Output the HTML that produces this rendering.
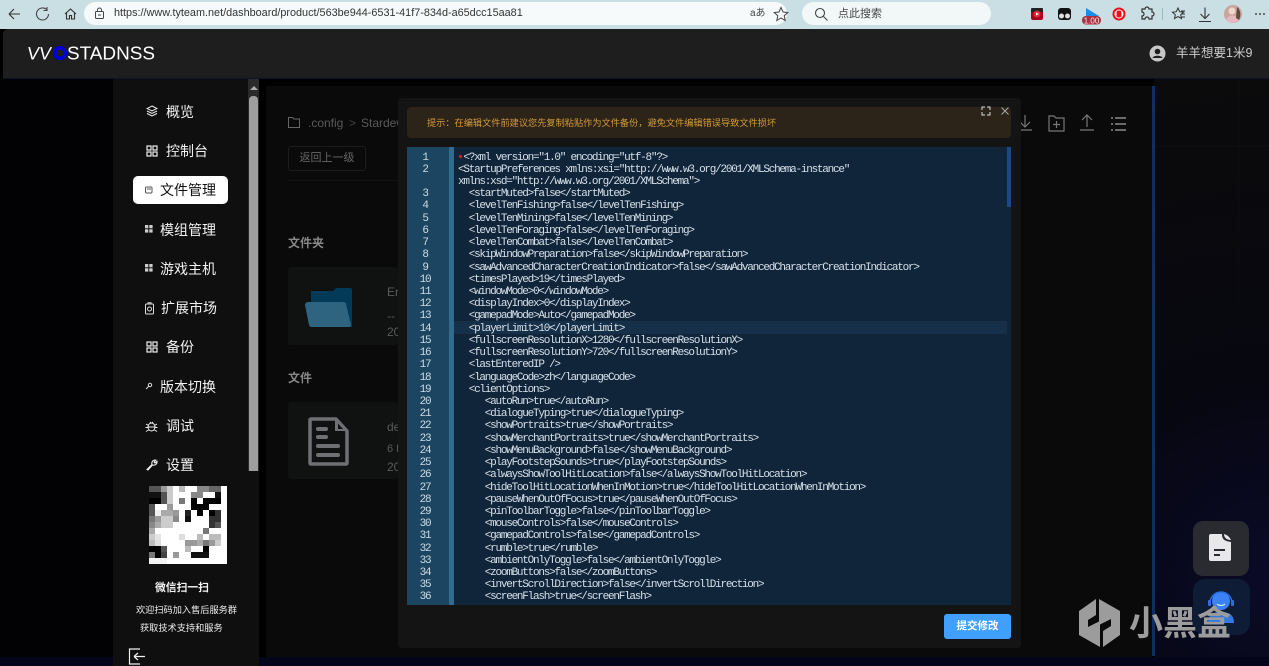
<!DOCTYPE html>
<html lang="zh"><head><meta charset="utf-8"><title>File Manager</title>
<style>
*{box-sizing:border-box}
html,body{margin:0;padding:0;background:#000}
body{width:1269px;height:666px;overflow:hidden;position:relative;font-family:"Liberation Sans","Noto Sans CJK SC",sans-serif}
.a{position:absolute}
.chrome{left:0;top:0;width:1269px;height:29px;background:#c9dfe3}
.pill{top:2px;height:23px;background:#f7fafa;border-radius:12px}
.url{left:114px;top:7px;font-size:10.850px;color:#333;white-space:nowrap}
.hdr{left:3px;top:29px;width:1266px;height:50px;background:#1e1e1e;border-radius:5px 0 0 0;border-bottom:1px solid #0a1428}
.side{left:113px;top:79px;width:146px;height:587px;background:#0f0f0f}
.mi{position:absolute;color:#f2f2f2;font-size:14px;line-height:20px;white-space:nowrap}
.active{left:133px;top:176px;width:95px;height:28px;background:#fff;border-radius:5px}
.code{left:458px;top:151.600px;font-family:"Liberation Mono",monospace;font-size:11px;letter-spacing:-1.244px;line-height:12.22px;color:#d5e0e8;white-space:pre;z-index:3}
.nums{left:407px;top:151.600px;width:32px;font-family:"Liberation Mono",monospace;font-size:11px;letter-spacing:-1.244px;line-height:12.22px;color:#cfdbe3;text-align:center;white-space:pre;z-index:3;padding-left:4px}
.dim{color:#5a5a5a;white-space:nowrap}
</style></head><body>
<div class="a" style="left:0;top:79px;width:1269px;height:587px;background:#020208"></div>
<div class="a" style="left:1154px;top:79px;width:115px;height:587px;background:radial-gradient(circle at 100% 85%,#0a0a28 0,#070710 40%,#0b0b0b 100%)"></div>
<div class="a" style="left:1238px;top:79px;width:1px;height:240px;background:linear-gradient(#0f0f0f,#0b0b0f)"></div>
<div class="a" style="left:1155px;top:146px;width:114px;height:1px;background:#0f0f0f"></div>
<div class="a" style="left:0;top:79px;width:113px;height:587px;background:#020204"></div>
<div class="a" style="left:259px;top:79px;width:895px;height:587px;background:#000"></div>
<div class="a" style="left:266px;top:86px;width:886px;height:571px;background:#0a0a0a"></div>
<div class="a" style="left:1152px;top:86px;width:3px;height:570px;background:#0c3066"></div>
<div class="a" style="left:0;top:657px;width:1269px;height:9px;background:#04041a"></div>

<!-- chrome -->
<div class="a chrome"></div>
<svg class="a" style="left:0;top:0" width="84" height="29" fill="none" stroke="#333" stroke-width="1.100">
<path d="M9 14H20M9 14l5-5M9 14l5 5"/>
<path d="M47 10a6 6 0 1 0 1.500 4M47 7v3.500h-3.500" stroke="#444"/>
<path d="M65 14l5.500-5 5.500 5M66.500 13v6h3v-3.500h2V19h3v-6"/>
</svg>
<div class="a pill" style="left:84px;width:703px"></div>
<svg class="a" style="left:93px;top:7px" width="14" height="14" fill="none" stroke="#444"><rect x="2.500" y="4.500" width="8" height="7" rx="1"/><path d="M4.500 4.500v-1.500a2 2 0 0 1 4 0v1.500M5 8h3"/></svg>
<div class="a url">https://www.tyteam.net/dashboard/product/563be944-6531-41f7-834d-a65dcc15aa81</div>
<div class="a" style="left:750px;top:7px;font-size:10px;color:#444;line-height:13px">aあ</div>
<svg class="a" style="left:772px;top:5px" width="18" height="18" fill="none" stroke="#444"><path d="M9 2.500l2 4.500 4.800.5-3.600 3.200 1 4.800L9 13l-4.200 2.500 1-4.800-3.600-3.200 4.800-.5z"/></svg>
<div class="a pill" style="left:802px;width:189px;background:#f2f7f8"></div>
<svg class="a" style="left:813px;top:6px" width="16" height="16" fill="none" stroke="#444" stroke-width="1.100"><circle cx="7" cy="7" r="4.500"/><path d="M10.500 10.500l4 4"/></svg>
<div class="a" style="left:838px;top:7px;font-size:11px;line-height:15px;color:#444;white-space:nowrap">点此搜索</div>
<svg class="a" style="left:1000px;top:0" width="269" height="29">
<rect x="31" y="8" width="12" height="12" rx="2" fill="#a8001a"/><rect x="31" y="8" width="12" height="4" rx="1" fill="#222"/><circle cx="37" cy="14" r="3.500" fill="#e8243c"/><path d="M36 12.500l3 1.500-3 1.500z" fill="#fff"/>
<rect x="58" y="8" width="13" height="12" rx="3" fill="#111"/><circle cx="61.500" cy="16" r="2.500" fill="#ddd"/><circle cx="67.500" cy="16" r="2.500" fill="#ddd"/>
<path d="M86 8l13 8H86z" fill="#1c8ce8"/><rect x="82" y="16" width="19" height="8.500" rx="4" fill="#a83240"/>
<text x="91.500" y="23.300" font-size="8" fill="#eee" text-anchor="middle" font-family="Liberation Sans">1.00</text>
<circle cx="119" cy="14" r="5.500" fill="#fff" stroke="#e8101c" stroke-width="2"/><rect x="116.500" y="10.500" width="5" height="7" rx="2" fill="#e8101c"/>
<path d="M142 9h3a2 2 0 0 1 4 0h3v3a2 2 0 0 1 0 4v3h-3a2 2 0 0 0-4 0h-3v-3a2 2 0 0 0 0-4z" fill="none" stroke="#333" stroke-width="1.200"/>
<path d="M162.500 8v12" stroke="#9bb"/>
<path d="M178 8l1.700 3.700 3.800.5-2.800 2.600.8 3.700-3.500-1.900-3.500 1.900.8-3.700-2.800-2.600 3.800-.5z" fill="none" stroke="#333"/><path d="M181 11h4M182 14h3M181 17h4" stroke="#333"/>
<path d="M205 7.500v11M200.500 14l4.500 4.500 4.500-4.500M199 21.500h12" fill="none" stroke="#333" stroke-width="1.100"/>
<circle cx="233" cy="14" r="9" fill="#c8a69c"/><circle cx="232" cy="11" r="3.500" fill="#f0d5cc"/><path d="M226 20c3-6 10-6 13 0a9 9 0 0 1-13 0z" fill="#e8b8c0"/><path d="M237 7c4 3 4 9 2 13l-3-2z" fill="#5d4a40"/>
<circle cx="256" cy="14" r=".9" fill="#222"/><circle cx="260" cy="14" r=".9" fill="#222"/><circle cx="264" cy="14" r=".9" fill="#222"/>
</svg>

<!-- header -->
<div class="a hdr"></div>
<svg class="a" style="left:26px;top:42px" width="132" height="24">
<text x="1" y="17.500" font-family="Liberation Sans" font-size="18" fill="#fff" textLength="24" lengthAdjust="spacingAndGlyphs" transform="skewX(-8) translate(2 0)">VV</text>
<circle cx="34" cy="11" r="5.300" fill="none" stroke="#0000d8" stroke-width="3.600"/>
<text x="41" y="17.500" font-family="Liberation Sans" font-size="18" fill="#fff" textLength="88" lengthAdjust="spacingAndGlyphs">STADNSS</text>
</svg>
<svg class="a" style="left:1149px;top:45px" width="17" height="17"><circle cx="8.500" cy="8.500" r="8" fill="#c8c8c8"/><circle cx="8.500" cy="6.500" r="2.800" fill="#1e1e1e"/><path d="M3.500 13c.5-3 9.500-3 10 0z" fill="#1e1e1e"/></svg>
<div class="a" style="left:1176px;top:44px;font-size:12.500px;line-height:18px;color:#ccc;white-space:nowrap">羊羊想要1米9</div>

<!-- sidebar -->
<div class="a side"></div>
<div class="a" style="left:248px;top:79px;width:11px;height:392px;background:#2a2a2a"></div>
<div class="a" style="left:249px;top:96px;width:9px;height:375px;background:#9e9e9e;border-radius:4px 4px 0 0"></div>
<div class="a" style="left:250px;top:86px;border:4px solid transparent;border-bottom:4px solid #aaa;border-top:0"></div>
<div class="a active"></div>
<svg class="a" style="left:146px;top:105px" width="12" height="12" fill="none" stroke="#eee" stroke-width="1"><path d="M6 1L11 3.500 6 6 1 3.500zM1 6l5 2.500L11 6M1 8.500L6 11l5-2.500"/></svg>
<div class="mi" style="left:166px;top:102px">概览</div>
<svg class="a" style="left:146px;top:145px" width="12" height="12" fill="none" stroke="#eee" stroke-width="1.200"><rect x="1" y="1" width="4" height="4"/><rect x="7" y="1" width="4" height="4"/><rect x="1" y="7" width="4" height="4"/><rect x="7" y="7" width="4" height="4"/></svg>
<div class="mi" style="left:166px;top:141px">控制台</div>
<svg class="a" style="left:145px;top:186px" width="8" height="8" fill="none" stroke="#555" stroke-width="1"><rect x=".5" y="1" width="6.500" height="6" rx="1"/><path d="M2 3h4"/></svg>
<div class="mi" style="left:160px;top:180px;color:#111">文件管理</div>
<svg class="a" style="left:145px;top:225px" width="8" height="8" fill="#ccc"><rect width="3.300" height="3.300"/><rect x="4.300" width="3.300" height="3.300"/><rect y="4.300" width="3.300" height="3.300"/><rect x="4.300" y="4.300" width="3.300" height="3.300"/></svg>
<div class="mi" style="left:160px;top:220px">模组管理</div>
<svg class="a" style="left:145px;top:264px" width="8" height="8" fill="#ccc"><rect width="3.300" height="3.300"/><rect x="4.300" width="3.300" height="3.300"/><rect y="4.300" width="3.300" height="3.300"/><rect x="4.300" y="4.300" width="3.300" height="3.300"/></svg>
<div class="mi" style="left:160px;top:259px">游戏主机</div>
<svg class="a" style="left:145px;top:302px" width="10" height="13" fill="none" stroke="#ddd"><rect x=".5" y="2" width="8" height="10" rx="1"/><circle cx="4.500" cy="7" r="2"/><path d="M3 2V.8h3V2"/></svg>
<div class="mi" style="left:161px;top:298px">扩展市场</div>
<svg class="a" style="left:146px;top:341px" width="12" height="12" fill="none" stroke="#eee" stroke-width="1.200"><rect x="1" y="1" width="4" height="4"/><rect x="7" y="1" width="4" height="4"/><rect x="1" y="7" width="4" height="4"/><rect x="7" y="7" width="4" height="4"/></svg>
<div class="mi" style="left:166px;top:337px">备份</div>
<svg class="a" style="left:145px;top:382px" width="8" height="8" fill="none" stroke="#ddd"><path d="M1 7l3-3"/><circle cx="5" cy="3" r="1.700"/></svg>
<div class="mi" style="left:160px;top:377px">版本切换</div>
<svg class="a" style="left:145px;top:420px" width="13" height="13" fill="none" stroke="#eee"><ellipse cx="6.500" cy="7" rx="3.500" ry="4"/><path d="M1 4l2.500 1.500M12 4L9.500 5.500M.5 7.500H3M12.500 7.500H10M1 11.500l2.500-1.500M12 11.500L9.500 10M3.500 7h6M5 2l1 1M8 2L7 3"/></svg>
<div class="mi" style="left:166px;top:416px">调试</div>
<svg class="a" style="left:146px;top:459px" width="12" height="12" fill="none" stroke="#eee" stroke-width="1.100"><path d="M1 10.500l5-5c-.8-2 .6-4.500 3-4.500l.8.2L8 3l1 1 2-1.700c.4 2.500-2 4.500-4.500 3.700l-4.500 5z"/></svg>
<div class="mi" style="left:166px;top:455px">设置</div>

<!-- QR -->
<svg class="a" style="left:149px;top:486px" width="78" height="78" shape-rendering="crispEdges">
<rect width="78" height="78" fill="#fff"/>
<rect x="0" y="0" width="12" height="6" fill="#555"/><rect x="12" y="0" width="6" height="6" fill="#999"/><rect x="18" y="0" width="6" height="6" fill="#ccc"/><rect x="30" y="0" width="6" height="6" fill="#bbb"/><rect x="48" y="0" width="12" height="6" fill="#888"/><rect x="60" y="0" width="12" height="6" fill="#666"/>
<rect x="0" y="6" width="12" height="6" fill="#111"/><rect x="12" y="6" width="6" height="6" fill="#555"/><rect x="18" y="6" width="6" height="6" fill="#ccc"/><rect x="42" y="6" width="12" height="6" fill="#888"/><rect x="66" y="6" width="6" height="6" fill="#111"/>
<rect x="0" y="12" width="12" height="6" fill="#000"/><rect x="12" y="12" width="6" height="6" fill="#555"/><rect x="18" y="12" width="6" height="6" fill="#ccc"/><rect x="30" y="12" width="6" height="6" fill="#777"/><rect x="42" y="12" width="6" height="6" fill="#000"/><rect x="54" y="12" width="18" height="6" fill="#000"/>
<rect x="0" y="18" width="6" height="6" fill="#555"/><rect x="18" y="18" width="6" height="6" fill="#999"/><rect x="42" y="18" width="18" height="6" fill="#000"/>
<rect x="0" y="24" width="6" height="6" fill="#555"/><rect x="6" y="24" width="6" height="6" fill="#eee"/><rect x="12" y="24" width="6" height="6" fill="#aaa"/><rect x="18" y="24" width="6" height="6" fill="#aaa"/><rect x="24" y="24" width="6" height="6" fill="#999"/><rect x="36" y="24" width="6" height="6" fill="#222"/><rect x="48" y="24" width="6" height="6" fill="#000"/><rect x="60" y="24" width="6" height="6" fill="#000"/><rect x="66" y="24" width="6" height="6" fill="#333"/>
<rect x="0" y="30" width="6" height="6" fill="#777"/><rect x="6" y="30" width="6" height="6" fill="#999"/><rect x="12" y="30" width="12" height="6" fill="#ccc"/><rect x="24" y="30" width="6" height="6" fill="#888"/><rect x="36" y="30" width="6" height="6" fill="#111"/><rect x="60" y="30" width="12" height="6" fill="#333"/>
<rect x="0" y="36" width="6" height="6" fill="#888"/><rect x="6" y="36" width="6" height="6" fill="#aaa"/><rect x="12" y="36" width="12" height="6" fill="#ccc"/><rect x="60" y="36" width="6" height="6" fill="#333"/><rect x="66" y="36" width="6" height="6" fill="#555"/>
<rect x="0" y="42" width="6" height="6" fill="#aaa"/><rect x="54" y="42" width="6" height="6" fill="#777"/>
<rect x="0" y="48" width="6" height="6" fill="#ccc"/><rect x="6" y="48" width="6" height="6" fill="#e5e5e5"/><rect x="30" y="48" width="6" height="6" fill="#ddd"/><rect x="48" y="48" width="6" height="6" fill="#bbb"/><rect x="60" y="48" width="12" height="6" fill="#bbb"/>
<rect x="0" y="54" width="6" height="6" fill="#bbb"/><rect x="6" y="54" width="6" height="6" fill="#ddd"/><rect x="36" y="54" width="12" height="6" fill="#999"/><rect x="48" y="54" width="6" height="6" fill="#aaa"/><rect x="54" y="54" width="6" height="6" fill="#777"/><rect x="60" y="54" width="6" height="6" fill="#999"/><rect x="66" y="54" width="6" height="6" fill="#ccc"/>
<rect x="0" y="60" width="12" height="6" fill="#000"/><rect x="12" y="60" width="6" height="6" fill="#555"/><rect x="36" y="60" width="6" height="6" fill="#bbb"/><rect x="54" y="60" width="6" height="6" fill="#000"/>
<rect x="0" y="66" width="6" height="6" fill="#777"/><rect x="6" y="66" width="6" height="6" fill="#000"/><rect x="12" y="66" width="6" height="6" fill="#444"/><rect x="24" y="66" width="6" height="6" fill="#999"/><rect x="42" y="66" width="18" height="6" fill="#111"/>
<rect x="0" y="72" width="18" height="6" fill="#f2f2f2"/>
</svg>
<div class="a" style="left:155px;top:580px;font-size:10.800px;line-height:16px;font-weight:700;color:#f5f5f5;white-space:nowrap">微信扫一扫</div>
<div class="a" style="left:136px;top:603px;font-size:9.200px;line-height:15px;color:#eee;white-space:nowrap">欢迎扫码加入售后服务群</div>
<div class="a" style="left:140px;top:621px;font-size:9.200px;line-height:15px;color:#eee;white-space:nowrap">获取技术支持和服务</div>
<svg class="a" style="left:128px;top:648px" width="18" height="17" fill="none" stroke="#f0f0f0" stroke-width="1.200"><path d="M12 1H1.500v15H12M17 8.500H6M6 8.500l4-3.500M6 8.500l4 3.500"/></svg>

<!-- main behind modal -->
<svg class="a" style="left:287px;top:116px" width="14" height="13" fill="none" stroke="#666"><path d="M1.500 11.500v-10h4l1.500 1.500h5.500v8.500z"/></svg>
<div class="a dim" style="left:308px;top:115px;font-size:12px;line-height:16px">.config</div>
<div class="a dim" style="left:349px;top:115px;font-size:12px;line-height:16px;color:#444">&gt;</div>
<div class="a dim" style="left:361px;top:115px;font-size:12px;line-height:16px;width:37px;overflow:hidden">Stardew</div>
<div class="a" style="left:288px;top:146px;width:78px;height:25px;border:1px solid #1c1c1c;border-radius:3px;font-size:11px;line-height:23px;text-align:center;color:#666">返回上一级</div>
<div class="a" style="left:288px;top:180px;width:110px;height:1px;background:#121212"></div>
<div class="a" style="left:288px;top:235px;font-size:12px;line-height:17px;font-weight:700;color:#888">文件夹</div>
<div class="a" style="left:288px;top:267px;width:110px;height:78px;background:#101212;border-radius:3px"></div>
<svg class="a" style="left:304px;top:287px" width="50" height="42"><path d="M7 4h22l3-3h14a2 2 0 0 1 2 2v37H7z" fill="#033a58"/><path d="M1 18a3 3 0 0 1 3-3h35a3 3 0 0 1 3 2l5 21a2 2 0 0 1-2 2H8a3 3 0 0 1-3-2z" fill="#2e6480"/></svg>
<div class="a dim" style="left:387px;top:284px;font-size:12px;line-height:16px;width:11px;overflow:hidden">Error</div>
<div class="a dim" style="left:387px;top:308px;font-size:12px;line-height:16px">--</div>
<div class="a dim" style="left:387px;top:324px;font-size:12px;line-height:16px;width:11px;overflow:hidden">2024</div>
<div class="a" style="left:288px;top:370px;font-size:12px;line-height:17px;font-weight:700;color:#888">文件</div>
<div class="a" style="left:288px;top:402px;width:110px;height:77px;background:#101212;border-radius:3px"></div>
<svg class="a" style="left:307px;top:416px" width="43" height="52"><path d="M4 3h25l11 12v32a1 1 0 0 1-1 1H4a1 1 0 0 1-1-1V4a1 1 0 0 1 1-1z" fill="#101212" stroke="#6e7073" stroke-width="3.500" stroke-linejoin="round"/><path d="M28 3l12 12H28z" fill="#6e7073"/><path d="M31 7.500l5 5.500h-5z" fill="#101212"/><rect x="9" y="11" width="12" height="4" rx="2" fill="#6e7073"/><rect x="9" y="19" width="12" height="4" rx="2" fill="#6e7073"/><rect x="9" y="28" width="24" height="4" rx="2" fill="#6e7073"/><rect x="9" y="37" width="24" height="4" rx="2" fill="#6e7073"/></svg>
<div class="a dim" style="left:387px;top:419px;font-size:12px;line-height:16px;width:11px;overflow:hidden">de</div>
<div class="a dim" style="left:387px;top:441px;font-size:11px;line-height:16px;width:11px;overflow:hidden">6 KB</div>
<div class="a dim" style="left:387px;top:459px;font-size:12px;line-height:16px;width:11px;overflow:hidden">2024</div>
<svg class="a" style="left:1018px;top:112px" width="112" height="22" fill="none" stroke="#777" stroke-width="1.200">
<path d="M7 3v12M2 10l5 5 5-5M0 18h14"/>
<path d="M31 4h5l2 2h8v13H31zM38.500 9v7M35 12.500h7"/>
<path d="M62 18h14M69 15V3M64 8l5-5 5 5"/>
<path d="M97 6h11M97 12h11M97 18h11M93 6h2M93 12h2M93 18h2" stroke-width="1.700"/>
</svg>

<!-- modal -->
<div class="a" style="left:398px;top:98px;width:623px;height:550px;background:#141414;border-radius:4px;z-index:2"></div>
<div class="a" style="left:407px;top:107px;width:604px;height:31px;background:#2c2419;border-radius:4px;z-index:2"></div>
<div class="a" style="left:427px;top:116px;font-size:9.200px;line-height:14px;color:#d39a3a;white-space:nowrap;z-index:3">提示：在编辑文件前建议您先复制粘贴作为文件备份，避免文件编辑错误导致文件损坏</div>
<svg class="a" style="left:980px;top:105px;z-index:3" width="32" height="14" fill="none" stroke="#ddd"><path d="M2 5V2h3M7 2h3v3M2 7v3h3M7 10h3V7"/><path d="M21.500 2.500l7 7M28.500 2.500l-7 7" stroke="#aaa"/></svg>
<div class="a" style="left:407px;top:147px;width:604px;height:458px;background:#10243a;z-index:2"></div>
<div class="a" style="left:407px;top:147px;width:42px;height:458px;background:#1b4560;z-index:2"></div>
<div class="a" style="left:449px;top:147px;width:5px;height:458px;background:#316c8c;z-index:2"></div>
<div class="a" style="left:454px;top:321px;width:553px;height:12.500px;background:#16304a;z-index:2"></div>
<div class="a" style="left:1007px;top:147px;width:4px;height:60px;background:#174a86;z-index:2"></div>
<div class="a" style="left:459px;top:155px;width:3px;height:3px;border-radius:50%;background:#e02020;z-index:3"></div>
<div class="a nums">1
2

3
4
5
6
7
8
9
10
11
12
13
14
15
16
17
18
19
20
21
22
23
24
25
26
27
28
29
30
31
32
33
34
35
36</div>
<div class="a code"> &lt;?xml version="1.0" encoding="utf-8"?&gt;
&lt;StartupPreferences xmlns:xsi="http://www.w3.org/2001/XMLSchema-instance"
xmlns:xsd="http://www.w3.org/2001/XMLSchema"&gt;
  &lt;startMuted&gt;false&lt;/startMuted&gt;
  &lt;levelTenFishing&gt;false&lt;/levelTenFishing&gt;
  &lt;levelTenMining&gt;false&lt;/levelTenMining&gt;
  &lt;levelTenForaging&gt;false&lt;/levelTenForaging&gt;
  &lt;levelTenCombat&gt;false&lt;/levelTenCombat&gt;
  &lt;skipWindowPreparation&gt;false&lt;/skipWindowPreparation&gt;
  &lt;sawAdvancedCharacterCreationIndicator&gt;false&lt;/sawAdvancedCharacterCreationIndicator&gt;
  &lt;timesPlayed&gt;19&lt;/timesPlayed&gt;
  &lt;windowMode&gt;0&lt;/windowMode&gt;
  &lt;displayIndex&gt;0&lt;/displayIndex&gt;
  &lt;gamepadMode&gt;Auto&lt;/gamepadMode&gt;
  &lt;playerLimit&gt;10&lt;/playerLimit&gt;
  &lt;fullscreenResolutionX&gt;1280&lt;/fullscreenResolutionX&gt;
  &lt;fullscreenResolutionY&gt;720&lt;/fullscreenResolutionY&gt;
  &lt;lastEnteredIP /&gt;
  &lt;languageCode&gt;zh&lt;/languageCode&gt;
  &lt;clientOptions&gt;
     &lt;autoRun&gt;true&lt;/autoRun&gt;
     &lt;dialogueTyping&gt;true&lt;/dialogueTyping&gt;
     &lt;showPortraits&gt;true&lt;/showPortraits&gt;
     &lt;showMerchantPortraits&gt;true&lt;/showMerchantPortraits&gt;
     &lt;showMenuBackground&gt;false&lt;/showMenuBackground&gt;
     &lt;playFootstepSounds&gt;true&lt;/playFootstepSounds&gt;
     &lt;alwaysShowToolHitLocation&gt;false&lt;/alwaysShowToolHitLocation&gt;
     &lt;hideToolHitLocationWhenInMotion&gt;true&lt;/hideToolHitLocationWhenInMotion&gt;
     &lt;pauseWhenOutOfFocus&gt;true&lt;/pauseWhenOutOfFocus&gt;
     &lt;pinToolbarToggle&gt;false&lt;/pinToolbarToggle&gt;
     &lt;mouseControls&gt;false&lt;/mouseControls&gt;
     &lt;gamepadControls&gt;false&lt;/gamepadControls&gt;
     &lt;rumble&gt;true&lt;/rumble&gt;
     &lt;ambientOnlyToggle&gt;false&lt;/ambientOnlyToggle&gt;
     &lt;zoomButtons&gt;false&lt;/zoomButtons&gt;
     &lt;invertScrollDirection&gt;false&lt;/invertScrollDirection&gt;
     &lt;screenFlash&gt;true&lt;/screenFlash&gt;</div>
<div class="a" style="left:944px;top:614px;width:67px;height:25px;background:#41a0ff;border-radius:3px;z-index:3;font-size:10.500px;line-height:25px;text-align:center;color:#fff;font-weight:700">提交修改</div>

<!-- floating -->
<div class="a" style="left:1193px;top:521px;width:56px;height:55px;background:#2a2b31;border-radius:10px"></div>
<svg class="a" style="left:1209px;top:534px" width="24" height="28"><path d="M2 0h11c0 4 1 7 9 8v17a2 2 0 0 1-2 2H2a2 2 0 0 1-2-2V2a2 2 0 0 1 2-2z" fill="#e8e8ec"/><path d="M15 0c4 1 6 4 7 6-4 0-7-2-7-6z" fill="#e8e8ec"/><rect x="5" y="15" width="11" height="2" fill="#2a2b31"/><rect x="5" y="20" width="6" height="2" fill="#2a2b31"/></svg>
<div class="a" style="left:1193px;top:579px;width:57px;height:56px;background:#0e1c36;border-radius:12px"></div>
<svg class="a" style="left:1204px;top:589px" width="34" height="36"><circle cx="17" cy="12" r="9" fill="#3b82f6"/><path d="M6 14a11 11 0 0 1 22 0" fill="none" stroke="#2b6fe0" stroke-width="1.500"/><rect x="4" y="11" width="3" height="6" rx="1" fill="#2b6fe0"/><rect x="27" y="11" width="3" height="6" rx="1" fill="#2b6fe0"/><path d="M13 15c2 2 6 2 8 0" stroke="#cfe" stroke-width="1" fill="none"/><path d="M4 34c0-9 6-11 13-11s13 2 13 11z" fill="#3478e0"/></svg>

<!-- watermark -->
<svg class="a" style="left:1079px;top:599px;z-index:5" width="42" height="49" fill="#9c9c9c"><path d="M0 12L17 0V16L9 21V28L21 22V48L0 36z"/><path d="M41 36L24 48V32L32 27V20L20 26V0L41 12z"/></svg>
<div class="a" style="left:1129px;top:604px;font-size:34px;font-weight:700;line-height:40px;color:#9c9c9c;white-space:nowrap;z-index:5">小黑盒</div>
</body></html>
